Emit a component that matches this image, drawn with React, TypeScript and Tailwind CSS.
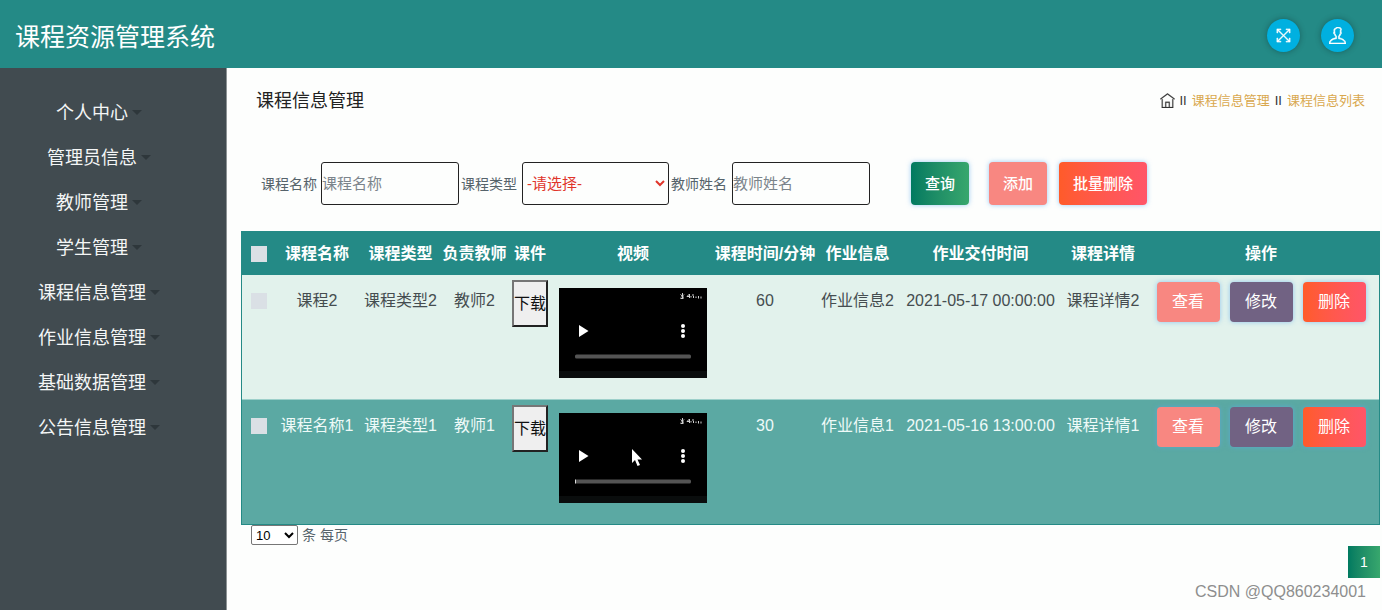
import { TfiFullscreen, TfiHome, TfiUser } from "react-icons/tfi";

const menuItems = [
  "个人中心",
  "管理员信息",
  "教师管理",
  "学生管理",
  "课程信息管理",
  "作业信息管理",
  "基础数据管理",
  "公告信息管理",
];

const courses = [
  {
    name: "课程2",
    type: "课程类型2",
    teacher: "教师2",
    minutes: 60,
    homework: "作业信息2",
    deadline: "2021-05-17 00:00:00",
    detail: "课程详情2",
    row: "bg-[#e2f2ec] text-[#454d50] *:border-[#9dd0ca]",
    hovered: false,
  },
  {
    name: "课程名称1",
    type: "课程类型1",
    teacher: "教师1",
    minutes: 30,
    homework: "作业信息1",
    deadline: "2021-05-16 13:00:00",
    detail: "课程详情1",
    row: "bg-[#5ba9a3] text-[#eefaf8] *:border-[#248a86]",
    hovered: true,
  },
];

const glow = "rounded-sm text-white shadow-[0_0_5px_rgba(90,170,240,0.6)]";
const searchButton = `h-[43px] px-3.5 text-[15px] font-medium ${glow}`;
const rowButton = `h-10 w-[63px] text-base ${glow}`;
const checkbox = "block size-4 appearance-none bg-[#dae0e5]";
const roundButton =
  "flex size-[33px] items-center justify-center rounded-full bg-[#00b0e0] shadow-[0_0_6px_rgba(0,0,0,0.3)]";

const VideoPreview = ({ hovered }: { hovered: boolean }) => (
  <div className="relative mx-auto h-[90px] w-[148px]">
    <svg viewBox="0 0 148 90" className="block h-full w-full">
      <rect width="148" height="90" fill="#000" />
      <rect y="83" width="148" height="7" fill="#0a0d0d" />
      <path d="M20 37v12l9.500-6z" fill="#fff" />
      <circle cx="124" cy="38" r="2" fill="#fff" />
      <circle cx="124" cy="43" r="2" fill="#fff" />
      <circle cx="124" cy="48" r="2" fill="#fff" />
      <rect x="16" y="66.500" width="116" height="4" rx="1.500" fill="#545454" />
      {hovered && <rect x="16" y="66.500" width="1" height="4" fill="#ddd" />}
      <path
        d="M121.500 6.500l3.500 3M123.500 5v6M122 9.500l3-3M121.500 10.500h3M128 8.500l2.500-2.500v4M128 8.500h3M132 8v1.500M134 6v2M134.500 8v2M137 8.500v1.500M139.500 8v2.500M142 8.500v2"
        stroke="#d0d0d0"
        strokeWidth="1"
        fill="none"
      />
    </svg>
    {hovered && (
      <svg viewBox="0 0 11 18" className="absolute top-9 left-[72px] h-[18px] w-[11px]">
        <path d="M1 0v14l3-3 2.500 6 2.500-1-2.500-5.500h4.500z" fill="#fff" />
      </svg>
    )}
  </div>
);

const Navbar = () => (
  <header className="flex h-[68px] items-center justify-between bg-[#248a86] pr-7 pl-[15px] text-white">
    <h1 className="pt-1.5 text-[25px] leading-8">课程资源管理系统</h1>
    <div className="flex items-center gap-[21px] pt-0.5">
      <button aria-label="全屏" className={roundButton}>
        <TfiFullscreen size={15} stroke="currentColor" strokeWidth={0.6} />
      </button>
      <button aria-label="用户" className={roundButton}>
        <TfiUser size={17} stroke="currentColor" strokeWidth={0.6} />
      </button>
    </div>
  </header>
);

const Sidebar = () => (
  <nav className="w-[227px] shrink-0 border-r border-[#8d9395] bg-[#414b50] pt-[23px] pr-7">
    {menuItems.map((item) => (
      <a
        key={item}
        href="#"
        className="flex h-[45px] items-center justify-center gap-1 text-[18px] text-[#f4f6f6]"
      >
        {item}
        <svg viewBox="0 0 10 5" className="mb-0.5 h-[5px] w-2.5">
          <path d="M0 0h10L5 5z" fill="#2e373b" />
        </svg>
      </a>
    ))}
  </nav>
);

const SearchForm = () => (
  <form className="mt-12 flex items-center pl-5 text-sm text-[#56636b]">
    <label htmlFor="courseName">课程名称</label>
    <input
      id="courseName"
      placeholder="课程名称"
      className="mr-0.5 ml-1 h-[43px] w-[138px] rounded-[3px] border border-[#222] text-[15px] placeholder:text-[#7b848b]"
    />
    <label htmlFor="courseType">课程类型</label>
    <select
      id="courseType"
      className="mr-0.5 ml-[5px] h-[43px] w-[147px] rounded-[3px] border border-[#222] text-[15px] text-[#e0352b]"
    >
      <option>-请选择-</option>
    </select>
    <label htmlFor="teacherName">教师姓名</label>
    <input
      id="teacherName"
      placeholder="教师姓名"
      className="ml-[5px] h-[43px] w-[138px] rounded-[3px] border border-[#222] text-[15px] placeholder:text-[#7b848b]"
    />
    <div className="ml-[41px] flex gap-3">
      <button type="button" className={`mr-2 bg-linear-to-r from-[#007a60] to-[#37a76d] ${searchButton}`}>
        查询
      </button>
      <button type="button" className={`bg-[#f88781] ${searchButton}`}>
        添加
      </button>
      <button type="button" className={`bg-linear-to-r from-[#ff5b29] to-[#ff5568] ${searchButton}`}>
        批量删除
      </button>
    </div>
  </form>
);

const CourseTable = () => (
  <table className="mt-[26px] w-full table-fixed border-separate border-spacing-0 border border-b-0 border-[#248a86] text-center text-base whitespace-nowrap">
    <colgroup>
      <col className="w-[33px]" />
      <col className="w-[84px]" />
      <col className="w-[83px]" />
      <col className="w-[65px]" />
      <col className="w-[46px]" />
      <col className="w-[160px]" />
      <col className="w-[104px]" />
      <col className="w-[81px]" />
      <col className="w-[165px]" />
      <col className="w-[80px]" />
      <col className="w-[236px]" />
    </colgroup>
    <thead className="bg-[#248a86] text-white">
      <tr className="h-[43px]">
        <th className="pl-[9px]">
          <input type="checkbox" aria-label="全选" className={checkbox} />
        </th>
        <th>课程名称</th>
        <th>课程类型</th>
        <th>负责教师</th>
        <th>课件</th>
        <th>视频</th>
        <th>课程时间/分钟</th>
        <th>作业信息</th>
        <th>作业交付时间</th>
        <th>课程详情</th>
        <th>操作</th>
      </tr>
    </thead>
    <tbody>
      {courses.map((course) => (
        <tr key={course.name} className={`h-[125px] align-top *:border-b ${course.row}`}>
          <td className="pt-[18px] pl-[9px]">
            <input type="checkbox" aria-label={course.name} className={checkbox} />
          </td>
          <td className="pt-3.5">{course.name}</td>
          <td className="pt-3.5">{course.type}</td>
          <td className="pt-3.5">{course.teacher}</td>
          <td className="pt-[5px]">
            <button className="h-[47px] w-9 border-2 border-t-[#767676] border-r-[#222] border-b-[#222] border-l-[#767676] bg-[#efefef] text-[#111]">
              下载
            </button>
          </td>
          <td className="pt-[13px]">
            <VideoPreview hovered={course.hovered} />
          </td>
          <td className="pt-3.5">{course.minutes}</td>
          <td className="pt-3.5">{course.homework}</td>
          <td className="pt-3.5">{course.deadline}</td>
          <td className="pt-3.5">{course.detail}</td>
          <td className="pt-[7px]">
            <div className="flex justify-center gap-2.5">
              <button className={`bg-[#f88781] ${rowButton}`}>查看</button>
              <button className={`bg-[#716283] ${rowButton}`}>修改</button>
              <button className={`bg-linear-to-r from-[#ff5b29] to-[#ff5568] ${rowButton}`}>删除</button>
            </div>
          </td>
        </tr>
      ))}
    </tbody>
  </table>
);

const App = () => {
  return (
    <div className="flex min-h-screen flex-col bg-[#fdfefd] font-['Liberation_Sans','Noto_Sans_CJK_SC',sans-serif]">
      <Navbar />
      <div className="flex flex-1">
        <Sidebar />
        <main className="min-w-0 flex-1 pt-5 pr-0.5 pl-3.5">
          <div className="flex items-center justify-between pr-[15px] pl-[15px]">
            <h2 className="text-[18px] leading-[26px] text-[#222]">课程信息管理</h2>
            <div className="flex items-center gap-[5px] text-[13px] text-[#333]">
              <TfiHome size={15} className="mb-0.5" stroke="currentColor" strokeWidth={0.3} />
              <span>II</span>
              <a href="#" className="text-[#d9a84e]">
                课程信息管理
              </a>
              <span>II</span>
              <a href="#" className="text-[#d9a84e]">
                课程信息列表
              </a>
            </div>
          </div>
          <SearchForm />
          <CourseTable />
          <div className="flex items-center gap-1 pl-2.5 text-sm text-[#56636b]">
            <select
              id="pageSize"
              className="h-5 w-[47px] rounded-xs border border-[#767676] bg-white text-[13px] text-black"
            >
              <option>10</option>
            </select>
            <label htmlFor="pageSize">条 每页</label>
          </div>
          <div className="flex justify-end pt-px">
            <button className="size-8 bg-linear-to-r from-[#007a60] to-[#37a76d] text-sm text-white">1</button>
          </div>
          <p className="pt-0.5 pr-3.5 text-right text-base text-[#8e8e8e]">CSDN @QQ860234001</p>
        </main>
      </div>
    </div>
  );
};

export default App;
